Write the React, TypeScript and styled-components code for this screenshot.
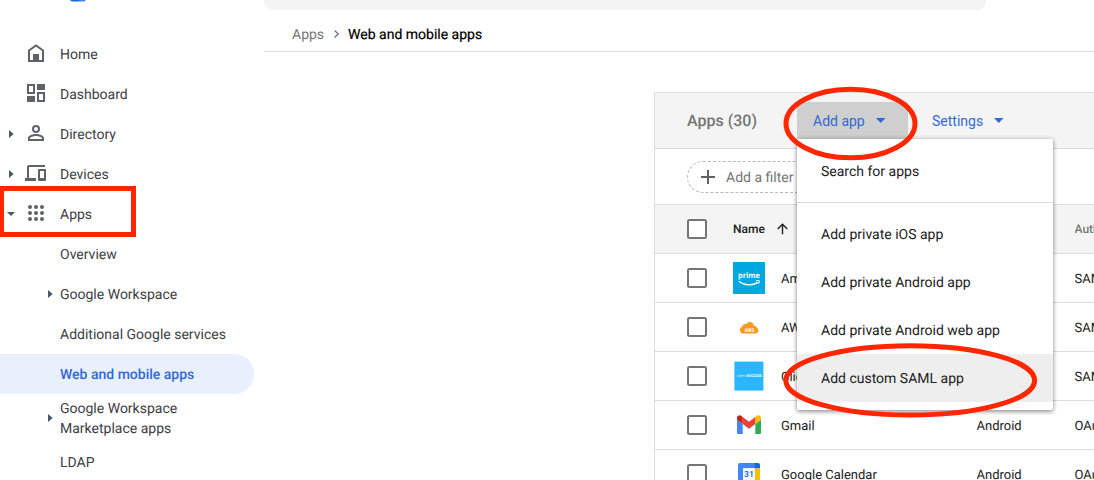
import React from "react";
import styled, { createGlobalStyle, css } from "styled-components";

const GlobalStyle = createGlobalStyle`
  *, *::before, *::after { box-sizing: border-box; }
  body {
    margin: 0;
    background: #fff;
    font-family: Roboto, "Liberation Sans", sans-serif;
    font-size: 14px;
    color: #212121;
    -webkit-font-smoothing: antialiased;
    text-rendering: geometricPrecision;
  }
`;

const RED = "#ff2600";

const Page = styled.div`
  position: relative;
  display: flex;
  width: 100%;
  height: 480px;
  overflow: hidden;
`;

/* ---------- sidebar ---------- */

const Sidebar = styled.aside`
  flex: 0 0 264px;
  display: flex;
  flex-direction: column;
  height: 480px;
  overflow: hidden;
`;

const LogoStrip = styled.div`
  flex: 0 0 34px;
  padding-left: 70px;

  svg { display: block; }
`;

const NavRow = styled.div<{ $active?: boolean; $tall?: boolean }>`
  flex: 0 0 ${(p) => (p.$tall ? 48 : 40)}px;
  display: flex;
  align-items: center;
  width: 254px;
  border-radius: 0 20px 20px 0;
  line-height: 20px;
  color: #3c4043;
  ${(p) =>
    p.$active &&
    css`
      background: #e8f0fe;
      color: #3367d6;
      font-weight: 500;
    `}
`;

const NavLabel = styled.span`
  padding-top: 2px;
`;

const CaretSlot = styled.span<{ $sub?: boolean }>`
  flex: none;
  display: flex;
  align-items: center;
  width: ${(p) => (p.$sub ? 60 : 24)}px;
  padding-left: ${(p) => (p.$sub ? 48 : 0)}px;
  height: 20px;
`;

const IconSlot = styled.span`
  flex: none;
  display: flex;
  width: 36px;
`;

const Caret = styled.svg<{ $indent?: number }>`
  display: block;
  margin-left: ${(p) => p.$indent ?? 0}px;
  fill: #455a64;
`;

const RightCaret = ({ indent = 0 }: { indent?: number }) => (
  <Caret $indent={indent} width="5" height="8" viewBox="0 0 5 8">
    <path d="M0 0l4.6 4L0 8z" />
  </Caret>
);

const DownCaret = () => (
  <Caret $indent={7} width="8" height="4" viewBox="0 0 8 4">
    <path d="M0 0h8L4 4z" />
  </Caret>
);

const NavIcon = ({ name }: { name: string }) => (
  <svg width="24" height="24" viewBox="0 0 24 24" fill="#5f6368">
    {name === "home" && (
      <>
        <path d="M5 8.5L12 3.4l7 5.100V19H5z" fill="none" stroke="#5f6368" strokeWidth="2" />
        <path d="M9 12h6v7H9z" />
      </>
    )}
    {name === "dashboard" && (
      <path
        fillRule="evenodd"
        d="M3 2h8v10H3zM5 4v6h4V4zM13 2h8v6h-8zM3 14h8v6H3zM13 10h8v10h-8zM15 12v6h4v-6z"
      />
    )}
    {name === "directory" && (
      <path d="M12 5a2 2 0 1 1 0 4 2 2 0 0 1 0-4M12 3a4 4 0 1 0 0 8 4 4 0 0 0 0-8zM12 12c-2.7 0-8 1.3-8 4v3h16v-3c0-2.7-5.300-4-8-4zm-6 5v-1c.2-.7 3.300-2 6-2s5.800 1.300 6 2v1z" />
    )}
    {name === "devices" && (
      <path
        fillRule="evenodd"
        d="M21 5V3H5c-1.100 0-2 .9-2 2V16H1v3h11v-3H5V5zM15 7h6a1 1 0 0 1 1 1V18a1 1 0 0 1-1 1h-6a1 1 0 0 1-1-1V8a1 1 0 0 1 1-1zM16 9V16h4V9z"
      />
    )}
    {name === "apps" &&
      [5, 11, 17].map((y) =>
        [6, 12, 18].map((x) => <circle key={`${x}-${y}`} cx={x} cy={y} r="2" />)
      )}
  </svg>
);

/* ---------- main column ---------- */

const Main = styled.main`
  flex: 1;
  min-width: 0;
  display: flex;
  flex-direction: column;
`;

const SearchBar = styled.div`
  flex: 0 0 10px;
  width: 722px;
  background: #f4f4f4;
  border-radius: 0 0 8px 8px;
`;

const Breadcrumb = styled.nav`
  flex: 0 0 42px;
  display: flex;
  align-items: center;
  padding: 9px 28px 0;
  border-bottom: 1px solid #dcdcdc;
  color: #757575;

  svg { margin: 0 9px 2px 10px; }
  strong {
    font-weight: 400;
    color: #000;
    -webkit-text-stroke: 0.2px #000;
  }
`;

const Card = styled.section`
  flex: none;
  margin: 40px 0 0 390px;
  border: 1px solid #dcdcdc;
  border-right: 0;
`;

const Toolbar = styled.header`
  display: flex;
  align-items: center;
  height: 56px;
  padding-left: 32px;
  background: #f4f4f4;
  border-bottom: 1px solid #dcdcdc;
`;

const Title = styled.h2`
  margin: 0;
  width: 110px;
  font-size: 16px;
  font-weight: 500;
  color: #757575;
`;

const ToolButton = styled.button<{ $open?: boolean }>`
  display: flex;
  align-items: center;
  gap: 11px;
  width: 111px;
  height: 37px;
  padding: 0 0 0 16px;
  border: 0;
  border-radius: 2px;
  background: ${(p) => (p.$open ? "#cfcfcf" : "transparent")};
  font: inherit;
  color: #3367d6;
  & + & { margin-left: 8px; }
`;

const ButtonCaret = () => (
  <svg width="10" height="5" viewBox="0 0 10 5" fill="#3367d6">
    <path d="M0 0h9.500L4.750 5z" />
  </svg>
);

const FilterBar = styled.div`
  display: flex;
  align-items: center;
  height: 56px;
  padding-left: 32px;
  border-bottom: 1px solid #dcdcdc;
`;

const FilterChip = styled.div`
  display: flex;
  align-items: center;
  gap: 11px;
  width: 124px;
  height: 32px;
  padding-left: 13px;
  border: 1px dashed #b8b8b8;
  border-radius: 16px;
  white-space: nowrap;
  color: #757575;
`;

const ChipLabel = styled.span`
  padding-top: 2px;
`;

const Row = styled.div<{ $head?: boolean }>`
  display: grid;
  grid-template-columns: 46px 243.5px 98px 1fr;
  align-items: center;
  height: 49px;
  padding-left: 32px;
  overflow: hidden;
  white-space: nowrap;
  border-bottom: 1px solid #dcdcdc;
  font-size: 13px;
  ${(p) =>
    p.$head &&
    css`
      background: #f4f4f4;
      font-size: 12px;
      font-weight: 500;
    `}
`;

const Checkbox = styled.span`
  width: 20px;
  height: 20px;
  border: 2px solid #757575;
  border-radius: 2.5px;
  background: #fff;
`;

const NameCell = styled.div<{ $gap: number }>`
  display: flex;
  align-items: center;
  gap: ${(p) => p.$gap}px;
`;

const Muted = styled.span`
  overflow: hidden;
  color: #757575;
`;

const Cell = styled.span`
  padding-top: 2px;
  overflow: hidden;
`;

const AppLogo = ({ name }: { name: string }) => (
  <svg width="32" height="32" viewBox="0 0 32 32">
    {name === "prime" && (
      <>
        <rect width="32" height="32" fill="#00a8e1" />
        <text x="16" y="16.400" textAnchor="middle" fontFamily="Open Sans, sans-serif" fontWeight="700" fontSize="7.600" textLength="22" lengthAdjust="spacingAndGlyphs" fill="#fff">
          prime
        </text>
        <path d="M6.300 19.800c5.500 4 13.200 4.200 18.700.6" fill="none" stroke="#fff" strokeWidth="1.300" strokeLinecap="round" />
        <path d="M23 19c1.200-.7 3.200-.7 3.500-.2s-.2 2.200-1.300 3.200" fill="none" stroke="#fff" strokeWidth="1" />
      </>
    )}
    {name === "aws" && (
      <>
        <path d="M11 22.500a3.600 3.600 0 0 1-1.500-7c-.1-2 2.500-2.900 3.700-2.100 2-3.900 7.400-2.900 7.800 1.700 1.500-.5 2.500.3 2.700 1.700 2.800 1.300 2 5.700-1.200 5.700z" fill="#f7981f" />
        <text x="16.500" y="20.800" textAnchor="middle" fontFamily="Roboto, sans-serif" fontWeight="700" fontSize="5.200" textLength="10" lengthAdjust="spacingAndGlyphs" fill="#fff">
          AWS
        </text>
      </>
    )}
    {name === "client" && (
      <>
        <rect x="1.400" y="1.600" width="29" height="29" fill="#29b6fc" />
        <text x="4" y="17.300" fontFamily="Roboto, sans-serif" fontSize="4" textLength="10" lengthAdjust="spacingAndGlyphs" fill="#d4f0ff">
          client
        </text>
        <text x="14" y="17.300" fontFamily="Roboto, sans-serif" fontWeight="700" fontSize="4" textLength="14.500" lengthAdjust="spacingAndGlyphs" fill="#fff">
          SUCCESS
        </text>
      </>
    )}
    {name === "gmail" && (
      <>
        <path d="M5.600 25h4.100V15L4 10.700v12.700c0 .9.700 1.600 1.600 1.600z" fill="#4285f4" />
        <path d="M22.300 25h4.100c.9 0 1.600-.7 1.600-1.600V10.700L22.300 15z" fill="#34a853" />
        <path d="M22.300 8.200V15l5.700-4.300V9c0-2.200-2.600-3.500-4.400-2.200z" fill="#fbbc04" />
        <path d="M9.700 15V8l6.300 4.800L22.300 8v7L16 19.800z" fill="#ea4335" />
        <path d="M4 9v1.700L9.700 15V8L8.400 6.900C6.600 5.600 4 6.800 4 9z" fill="#c5221f" />
      </>
    )}
    {name === "calendar" && (
      <>
        <path d="M5 7a2 2 0 0 1 2-2h15v5.500H10.500V22H5z" fill="#4285f4" />
        <path d="M21.700 5H25a2 2 0 0 1 2 2v3.500h-5.300z" fill="#1967d2" />
        <path d="M21.700 10.500H27V22h-5.300z" fill="#fbbc04" />
        <path d="M5 22h5.500v5H7a2 2 0 0 1-2-2z" fill="#188038" />
        <path d="M10.500 22h11.200v5H10.500z" fill="#34a853" />
        <path d="M21.700 22H27l-5.300 5z" fill="#ea4335" />
        <path d="M10.200 10.200h11.500V22H10.200z" fill="#fff" />
        <text x="16" y="19.300" textAnchor="middle" fontFamily="Roboto, sans-serif" fontWeight="700" fontSize="8.500" fill="#2b73e8">
          31
        </text>
      </>
    )}
  </svg>
);

/* ---------- dropdown ---------- */

const Menu = styled.div`
  position: absolute;
  left: 797px;
  top: 139px;
  width: 256px;
  padding: 8px 0;
  background: #fff;
  border-radius: 2px;
  box-shadow: 0 2px 4px rgba(0, 0, 0, 0.32), 0 0 5px rgba(0, 0, 0, 0.22);
`;

const MenuItem = styled.div<{ $hover?: boolean }>`
  display: flex;
  align-items: center;
  height: 48px;
  padding: 2px 24px 0;
  background: ${(p) => (p.$hover ? "#eee" : "transparent")};
`;

const MenuDivider = styled.div`
  height: 1px;
  margin: 7px 0;
  background: #dcdcdc;
`;

/* ---------- highlight marks ---------- */

const Marks = styled.svg`
  position: absolute;
  left: 0;
  top: 0;
  pointer-events: none;
`;

const navTop = [
  { label: "Home", icon: "home" },
  { label: "Dashboard", icon: "dashboard" },
  { label: "Directory", icon: "directory", caret: "right" },
  { label: "Devices", icon: "devices", caret: "right" },
  { label: "Apps", icon: "apps", caret: "down" },
];

const navSub: { label: React.ReactNode; caret?: boolean; active?: boolean; tall?: boolean }[] = [
  { label: "Overview" },
  { label: "Google Workspace", caret: true },
  { label: "Additional Google services" },
  { label: "Web and mobile apps", active: true },
  { label: <>Google Workspace<br />Marketplace apps</>, caret: true, tall: true },
  { label: "LDAP" },
];

const apps = [
  { logo: "prime", name: "Amazon", platform: "", auth: "SAML" },
  { logo: "aws", name: "AWS", platform: "", auth: "SAML" },
  { logo: "client", name: "Client", platform: "", auth: "SAML" },
  { logo: "gmail", name: "Gmail", platform: "Android", auth: "OAuth" },
  { logo: "calendar", name: "Google Calendar", platform: "Android", auth: "OAuth" },
];

export default function App() {
  return (
    <Page>
      <GlobalStyle />
      <Sidebar>
        <LogoStrip>
          <svg width="16" height="2" viewBox="0 0 16 2">
            <path d="M0 0h9v1.500H3Q1 1.500 0 0z" fill="#1967d2" />
            <path d="M9 0h7q-1 1.500-3 1.500H9z" fill="#4285f4" />
          </svg>
        </LogoStrip>
        {navTop.map((n) => (
          <NavRow key={n.label}>
            <CaretSlot>
              {n.caret === "right" && <RightCaret indent={9} />}
              {n.caret === "down" && <DownCaret />}
            </CaretSlot>
            <IconSlot>
              <NavIcon name={n.icon} />
            </IconSlot>
            <NavLabel>{n.label}</NavLabel>
          </NavRow>
        ))}
        {navSub.map((n, i) => (
          <NavRow key={i} $active={n.active} $tall={n.tall}>
            <CaretSlot $sub>{n.caret && <RightCaret />}</CaretSlot>
            <NavLabel>{n.label}</NavLabel>
          </NavRow>
        ))}
      </Sidebar>

      <Main>
        <SearchBar />
        <Breadcrumb>
          Apps
          <svg width="5" height="8" viewBox="0 0 5 8" fill="none" stroke="#757575" strokeWidth="1.300">
            <path d="M.6.500L4.200 4 .6 7.500" />
          </svg>
          <strong>Web and mobile apps</strong>
        </Breadcrumb>
        <Card>
          <Toolbar>
            <Title>Apps (30)</Title>
            <ToolButton $open>
              Add app <ButtonCaret />
            </ToolButton>
            <ToolButton>
              Settings <ButtonCaret />
            </ToolButton>
          </Toolbar>
          <FilterBar>
            <FilterChip>
              <svg width="14" height="14" viewBox="0 0 14 14" stroke="#616161" strokeWidth="2">
                <path d="M7 0v14M0 7h14" />
              </svg>
              <ChipLabel>Add a filter</ChipLabel>
            </FilterChip>
          </FilterBar>
          <Row $head>
            <Checkbox />
            <NameCell $gap={12}>
              Name
              <svg width="11" height="12" viewBox="0 0 11 12" fill="none" stroke="#212121" strokeWidth="1.400">
                <path d="M5.500 11.200V1.200M.7 6l4.800-4.800L10.300 6" />
              </svg>
            </NameCell>
            <span />
            <Muted>Authentication</Muted>
          </Row>
          {apps.map((a) => (
            <Row key={a.name}>
              <Checkbox />
              <NameCell $gap={16}>
                <AppLogo name={a.logo} />
                <Cell>{a.name}</Cell>
              </NameCell>
              <Cell>{a.platform}</Cell>
              <Cell>{a.auth}</Cell>
            </Row>
          ))}
        </Card>
      </Main>

      <Menu>
        <MenuItem>Search for apps</MenuItem>
        <MenuDivider />
        <MenuItem>Add private iOS app</MenuItem>
        <MenuItem>Add private Android app</MenuItem>
        <MenuItem>Add private Android web app</MenuItem>
        <MenuItem $hover>Add custom SAML app</MenuItem>
      </Menu>

      <Marks width="1094" height="480" viewBox="0 0 1094 480" fill="none" stroke={RED} strokeWidth="5">
        <rect x="1.500" y="188.500" width="132" height="46" />
        <ellipse cx="850.500" cy="123.500" rx="64.500" ry="34.300" />
        <ellipse cx="910.200" cy="380.400" rx="124.400" ry="34.700" />
      </Marks>
    </Page>
  );
}
